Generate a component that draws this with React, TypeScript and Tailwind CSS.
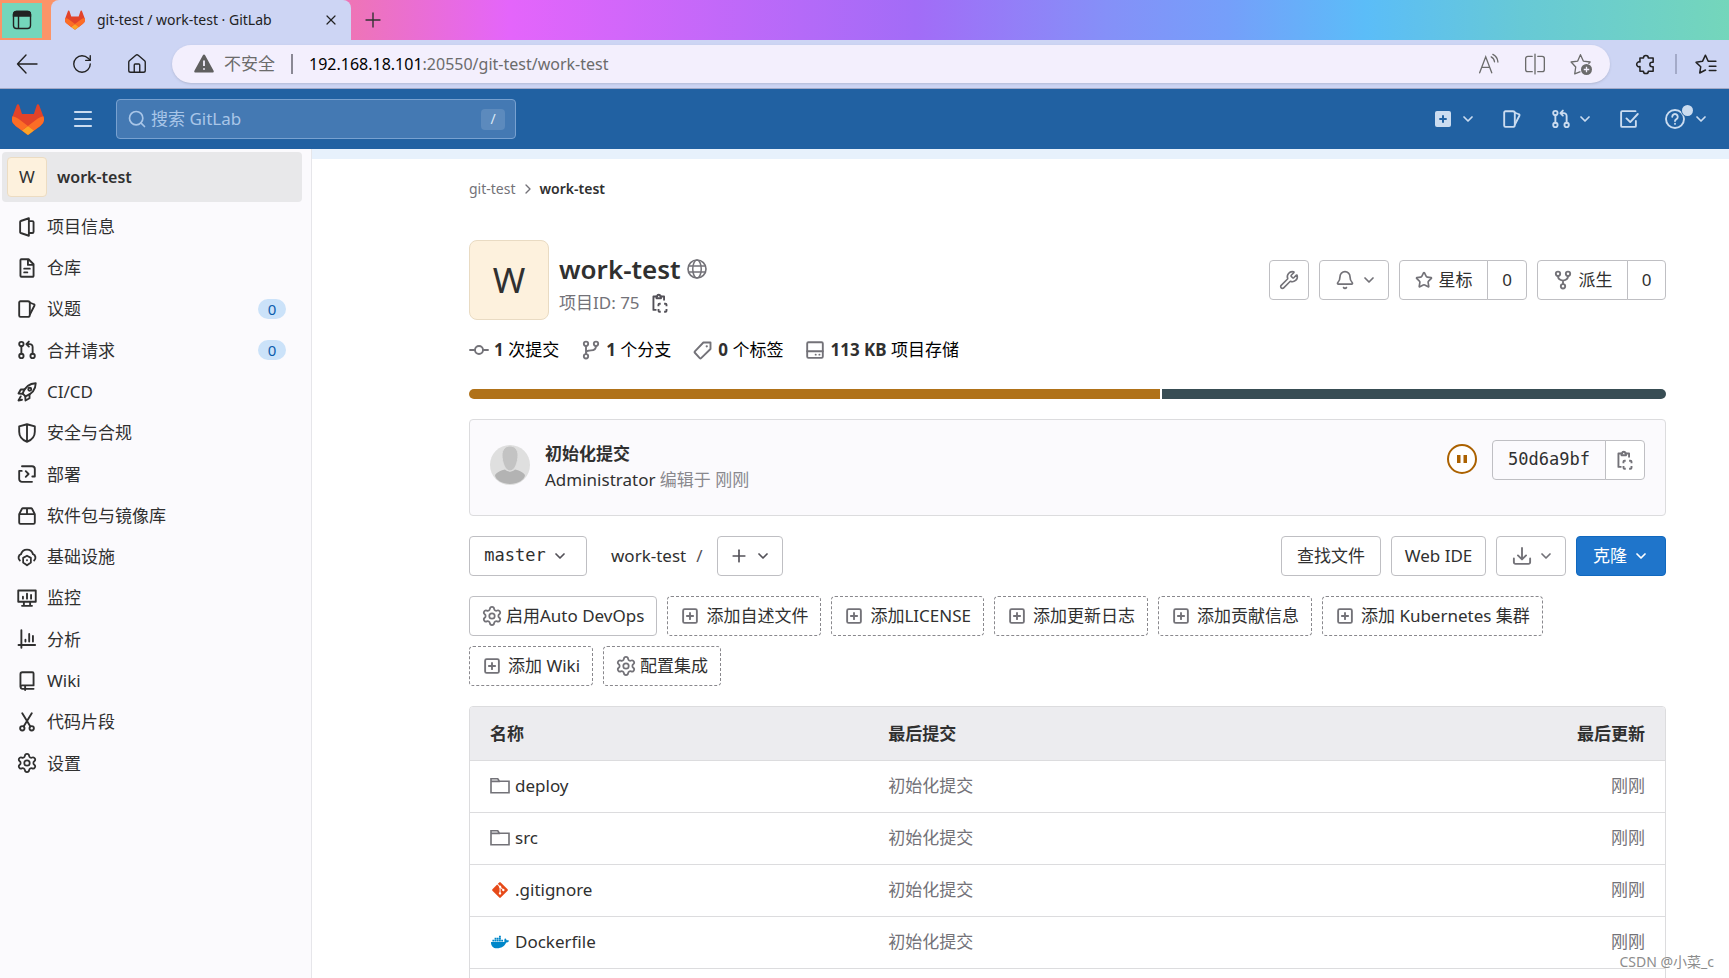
import type { ReactNode } from "react";
import { Bell, ChevronDown, ChevronRight, House, Menu, Plus, RotateCw, Search, Settings, Star, Wrench, X } from "lucide-react";
import { FaDocker, FaGitAlt } from "react-icons/fa";

function Glyph({ children, className = "size-5" }: { children: ReactNode; className?: string }) {
  return (
    <svg
      viewBox="0 0 16 16"
      className={`shrink-0 ${className}`}
      fill="none"
      stroke="currentColor"
      strokeWidth={1.5}
      strokeLinecap="round"
      strokeLinejoin="round"
      aria-hidden="true"
    >
      {children}
    </svg>
  );
}

function GitLabLogo({ className }: { className: string }) {
  return (
    <svg viewBox="0 0 25 24" className={`shrink-0 ${className}`} aria-hidden="true">
      <path
        d="m24.507 9.5-.034-.09L21.082.562a.896.896 0 0 0-1.694.091l-2.29 7.01H7.825L5.535.653a.898.898 0 0 0-1.694-.09L.451 9.411.416 9.5a6.297 6.297 0 0 0 2.09 7.278l.012.01.03.022 5.16 3.867 2.56 1.935 1.554 1.176a1.051 1.051 0 0 0 1.268 0l1.555-1.176 2.56-1.935 5.197-3.89.014-.01A6.297 6.297 0 0 0 24.507 9.5Z"
        fill="#E24329"
      />
      <path
        d="m24.507 9.5-.034-.09a11.44 11.44 0 0 0-4.56 2.051l-7.447 5.632 4.742 3.584 5.197-3.89.014-.01A6.297 6.297 0 0 0 24.507 9.5Z"
        fill="#FC6D26"
      />
      <path
        d="m7.707 20.677 2.56 1.935 1.555 1.176a1.051 1.051 0 0 0 1.268 0l1.555-1.176 2.56-1.935-4.743-3.584-4.755 3.584Z"
        fill="#FCA326"
      />
      <path
        d="M5.01 11.461a11.43 11.43 0 0 0-4.56-2.05L.416 9.5a6.297 6.297 0 0 0 2.09 7.278l.012.01.03.022 5.16 3.867 4.745-3.584-7.444-5.632Z"
        fill="#FC6D26"
      />
    </svg>
  );
}

const IssuesIcon = () => (
  <Glyph>
    <path d="M2.75 1.75h6a1.5 1.5 0 0 1 1.5 1.5v9.5a1.5 1.5 0 0 1-1.5 1.5h-6a1 1 0 0 1-1-1V2.75a1 1 0 0 1 1-1Z" />
    <path d="m10.5 3 3 1.2a.8.8 0 0 1 .5 1L10.5 12" />
  </Glyph>
);

const MergeRequestIcon = () => (
  <Glyph>
    <circle cx="3.5" cy="3.25" r="1.75" />
    <circle cx="3.5" cy="12.75" r="1.75" />
    <circle cx="12.5" cy="12.75" r="1.75" />
    <path d="M3.5 5v6M12.5 11V5.5a2.25 2.25 0 0 0-2.25-2.25H8M9.5 1.25l-2 2 2 2" />
  </Glyph>
);

const CopyIcon = () => (
  <Glyph>
    <path strokeLinecap="butt" d="M5 2.75H2.75V13.5H5.2M9 2.75h2.25V6" />
    <path d="M5.2 4.2h3.6V2.6H8.2a1.2 1.2 0 0 0-2.4 0h-.6v1.6Z" />
    <path
      strokeLinecap="butt"
      d="M6.75 10.5V9.4a.8.8 0 0 1 .8-.8h1M11.3 8.6h1.1a.8.8 0 0 1 .8.800v1.1M13.2 12.8v1.4a.8.8 0 0 1-.8.800h-1.1M8.600 15h-1a.8.8 0 0 1-.8-.800v-1.4"
    />
  </Glyph>
);

const PlusSquareIcon = () => (
  <Glyph>
    <rect x="2.5" y="2.5" width="11" height="11" rx="1.2" />
    <path d="M8 5.5v5M5.5 8h5" />
  </Glyph>
);

const FolderIcon = () => (
  <Glyph>
    <path strokeLinejoin="miter" strokeWidth={1.3} d="M.8 13.4V2.2h5.4l1.3 2h7.700v9.2H.8ZM.8 4.300h7" />
  </Glyph>
);

const GlobeIcon = () => (
  <Glyph className="size-5 text-[#737278]">
    <circle cx="8" cy="8" r="7.2" strokeWidth={1.3} />
    <ellipse cx="8" cy="8" rx="3.4" ry="7.2" strokeWidth={1.2} />
    <path strokeWidth={1.2} d="M1.3 5.600h13.400M1.3 10.400h13.400" />
  </Glyph>
);

const Chevron = () => <ChevronDown className="size-4 shrink-0" strokeWidth={2.6} aria-hidden="true" />;

const Gear = () => (
  <Settings viewBox="1 1 22 22" className="size-5 shrink-0" strokeWidth={1.9} aria-hidden="true" />
);

type NavItem = { label: string; icon: ReactNode; count?: number };

const navItems: NavItem[] = [
  {
    label: "项目信息",
    icon: (
      <Glyph>
        <path d="M9.5 1 3 3.2a.7.7 0 0 0-.5.7v8.2c0 .3.2.6.5.7L9.5 15V1ZM9.5 3.25h2.75a1 1 0 0 1 1 1v7.5a1 1 0 0 1-1 1H9.5" />
      </Glyph>
    ),
  },
  {
    label: "仓库",
    icon: (
      <Glyph>
        <path d="M3.5 1h5.75l4 4v9.25a.75.75 0 0 1-.75.75h-9a.75.75 0 0 1-.75-.75V1.75A.75.75 0 0 1 3.5 1ZM8.75 1.5V5.5h4M5.75 8.5h4.5M5.75 11.5h2.5" />
      </Glyph>
    ),
  },
  { label: "议题", icon: <IssuesIcon />, count: 0 },
  { label: "合并请求", icon: <MergeRequestIcon />, count: 0 },
  {
    label: "CI/CD",
    icon: (
      <Glyph>
        <path d="M4.5 9.2C6.2 4.5 9.5 1.2 15 1c-.2 5.5-3.5 8.8-8.2 10.5L4.5 9.2Z" />
        <path d="M6 6H3L1.2 9.2l3.3.2M10 10v3l-3.200 1.800-.2-3.300M3 11.5l-1.800 3.300 2.800-.6" />
        <circle cx="10.2" cy="5.8" r="1.2" />
      </Glyph>
    ),
  },
  {
    label: "安全与合规",
    icon: (
      <Glyph>
        <path d="M8 1 1.75 2.75V7c0 4 2.75 6.75 6.25 8 3.5-1.25 6.25-4 6.25-8V2.75L8 1ZM8 1v14" />
      </Glyph>
    ),
  },
  {
    label: "部署",
    icon: (
      <Glyph>
        <path d="M4 1.75h8A2.25 2.25 0 0 1 14.25 4v6M12 14.25H4A2.25 2.25 0 0 1 1.75 12V5.5M1.75 5.5h2M14.25 10h-2M7 5.75 9.25 8 7 10.25" />
      </Glyph>
    ),
  },
  {
    label: "软件包与镜像库",
    icon: (
      <Glyph>
        <path d="M1.75 6.5 4 2.2a.9.9 0 0 1 .8-.45h6.4a.9.9 0 0 1 .8.45l2.25 4.3v6.75a1 1 0 0 1-1 1H2.75a1 1 0 0 1-1-1V6.5ZM1.75 6.5h12.5M8 1.75V6.5" />
      </Glyph>
    ),
  },
  {
    label: "基础设施",
    icon: (
      <Glyph>
        <path d="M2.3 10.8A3 3 0 0 1 3.2 5.700a5 5 0 0 1 9.600 0 3 3 0 0 1 .9 5.100" />
        <path strokeWidth={1.4} d="m8 7 3.100 1.700v3.700L8 14.600l-3.100-2.200V8.700L8 7Z" />
        <circle cx="8" cy="10.600" r=".3" strokeWidth={1} />
      </Glyph>
    ),
  },
  {
    label: "监控",
    icon: (
      <Glyph>
        <path d="M1 2h14v9H1V2ZM5.5 11v2.8M10.5 11v2.8M4 14.25h8M4.75 7v1.5M8 4.5v4M11.25 5.5v3" />
      </Glyph>
    ),
  },
  {
    label: "分析",
    icon: (
      <Glyph>
        <path d="M3.5 1v14M1.2 12.75h13.3M6.75 8.5V10M9.75 4v6M12.75 5.5V10" />
      </Glyph>
    ),
  },
  {
    label: "Wiki",
    icon: (
      <Glyph>
        <path d="M13.25 11.5V2a1 1 0 0 0-1-1h-8a1.5 1.5 0 0 0-1.5 1.5v10M13.25 11.5h-9a1.3 1.3 0 0 0 0 2.75h9M6.5 12v3.2" />
      </Glyph>
    ),
  },
  {
    label: "代码片段",
    icon: (
      <Glyph>
        <circle cx="4.25" cy="13" r="1.75" />
        <circle cx="11.75" cy="13" r="1.75" />
        <path d="m4.2 1 6.5 10.6M11.8 1 5.3 11.6" />
      </Glyph>
    ),
  },
  { label: "设置", icon: <Gear /> },
];

const files = [
  { name: "deploy", icon: <FolderIcon /> },
  { name: "src", icon: <FolderIcon /> },
  { name: ".gitignore", icon: <FaGitAlt className="mx-px size-[18px] text-[#e64a19]" aria-hidden="true" /> },
  { name: "Dockerfile", icon: <FaDocker className="mx-px size-[18px] text-[#0087c9]" aria-hidden="true" /> },
];

const quickActions = [
  { label: "启用Auto DevOps", gear: true, dashed: false },
  { label: "添加自述文件", gear: false, dashed: true },
  { label: "添加LICENSE", gear: false, dashed: true },
  { label: "添加更新日志", gear: false, dashed: true },
  { label: "添加贡献信息", gear: false, dashed: true },
  { label: "添加 Kubernetes 集群", gear: false, dashed: true },
  { label: "添加 Wiki", gear: false, dashed: true },
  { label: "配置集成", gear: true, dashed: true },
];

function BrowserChrome() {
  return (
    <header className="shrink-0">
      <div className="flex h-10 bg-[linear-gradient(90deg,#fb9468_0%,#fb9468_3%,#ee74b8_20.5%,#e465fb_29.5%,#a26cf7_53%,#8590f8_64%,#759ffa_71%,#5bbdf8_79%,#67c9d6_88%,#74d6bb_100%)]">
        <div className="flex w-[51px] items-center pl-0.5">
          <button aria-label="标签页操作" className="flex h-[35px] w-10 items-center justify-center bg-[#74d6bb] text-[#222]">
            <svg viewBox="0 0 20 20" className="size-5" fill="none" stroke="currentColor" strokeWidth="1.4" aria-hidden="true">
              <rect x="1.5" y="1.5" width="17" height="17" rx="3" />
              <path d="M6.5 6v12" />
              <path d="M1.5 6V4.5a3 3 0 0 1 3-3h11a3 3 0 0 1 3 3V6Z" fill="currentColor" />
            </svg>
          </button>
        </div>
        <div className="flex w-[300px] items-center rounded-t-lg bg-[#cdd5f4] pr-3 pl-3.5 text-sm text-[#222]">
          <GitLabLogo className="h-5 w-5" />
          <span className="ml-3 grow whitespace-nowrap">git-test / work-test · GitLab</span>
          <button aria-label="关闭标签页">
            <X className="size-4" strokeWidth={1.8} />
          </button>
        </div>
        <button aria-label="新建标签页" className="ml-2.5 text-[#333]">
          <Plus className="size-6" strokeWidth={1.4} />
        </button>
      </div>
      <div className="flex h-[49px] items-center border-b border-[#a2a9c6] bg-[#cdd5f4] pr-3 text-[#222]">
        <div className="flex w-[172px] items-center gap-[33px] pl-4">
          <button aria-label="后退">
            <svg viewBox="0 0 22 22" className="size-[22px]" fill="none" stroke="currentColor" strokeWidth="1.4" strokeLinecap="round" strokeLinejoin="round" aria-hidden="true">
              <path d="M21 11H1.500M10 2 1.500 11l8.500 9" />
            </svg>
          </button>
          <button aria-label="刷新">
            <RotateCw className="size-[22px]" strokeWidth={1.5} />
          </button>
          <button aria-label="主页">
            <House className="size-[22px]" strokeWidth={1.5} />
          </button>
        </div>
        <div className="flex h-[38px] grow items-center rounded-full bg-[#f3effd] pr-[18px] pl-[22px] text-[#6b6b6b] shadow-sm">
          <svg viewBox="0 0 20 20" className="size-5" aria-hidden="true">
            <path d="M8.9 1.2a1.25 1.25 0 0 1 2.2 0l8.500 15.5a1.25 1.25 0 0 1-1.1 1.9h-17a1.25 1.25 0 0 1-1.1-1.9Z" fill="#5f5f5f" />
            <path d="M10 6.5V12M10 14.2v1.6" stroke="#f3effd" strokeWidth="1.8" />
          </svg>
          <span className="ml-2.5 text-[17px]">不安全</span>
          <span className="mx-4 h-5 w-0.5 bg-[#8a8894]" />
          <span className="grow text-base whitespace-nowrap">
            <span className="text-black">192.168.18.101</span>:20550/git-test/work-test
          </span>
          <div className="flex items-center gap-6">
            <button aria-label="大声朗读">
              <svg viewBox="0 0 20 20" className="size-[22px]" fill="none" stroke="currentColor" strokeWidth="1.2" strokeLinecap="round" aria-hidden="true">
                <path d="M1.5 18 7 3.5 12.5 18M3.4 13h7.2M12 3.5c1.8 1 2.8 2.5 3 4.5M13.5 1.2c2.8 1.4 4.4 3.8 4.6 7" />
              </svg>
            </button>
            <button aria-label="分屏">
              <svg viewBox="0 0 20 20" className="size-[22px]" fill="none" stroke="currentColor" strokeWidth="1.2" strokeLinecap="round" aria-hidden="true">
                <path d="M7.5 3h-4a2 2 0 0 0-2 2v10a2 2 0 0 0 2 2h4M12.5 3h4a2 2 0 0 1 2 2v10a2 2 0 0 1-2 2h-4M10 1v18" />
              </svg>
            </button>
            <button aria-label="收藏此页">
              <svg viewBox="0 0 20 20" className="size-[22px]" fill="none" stroke="currentColor" strokeWidth="1.2" strokeLinejoin="round" aria-hidden="true">
                <path d="m9.5 17-5.2 2 .9-6.3L1 8.200l6-.9 2.500-5.800 2.600 5.800 6.200.9-1.500 1.600" />
                <circle cx="15" cy="15" r="5" fill="currentColor" stroke="none" />
                <path d="M15 12.5v5M12.5 15h5" stroke="#f3effd" />
              </svg>
            </button>
          </div>
        </div>
        <div className="flex items-center pl-[25px]">
          <button aria-label="扩展">
            <svg viewBox="0 0 20 20" className="size-[22px]" fill="none" stroke="currentColor" strokeWidth="1.4" strokeLinejoin="round" aria-hidden="true">
              <path d="M4.500 4.500h3.200a2.200 2.200 0 1 1 4.400 0h4.400v4h-1a2 2 0 0 0 0 4h1v4h-4.400a2.200 2.200 0 1 1-4.400 0H4.500v-4.200a2.200 2.200 0 1 1 0-4.100Z" />
            </svg>
          </button>
          <span className="mx-[18px] h-5 w-0.5 bg-[#a3aac8]" />
          <button aria-label="收藏夹">
            <svg viewBox="0 0 20 20" className="size-[22px]" fill="none" stroke="currentColor" strokeWidth="1.4" strokeLinejoin="round" strokeLinecap="round" aria-hidden="true">
              <path d="m9.500 15.500-5.200 2.700.9-5.700L1 8.500l5.800-.9L9.500 2 12 7.500h7M13 12h6M13 16h6" />
            </svg>
          </button>
        </div>
      </div>
    </header>
  );
}

function Navbar() {
  return (
    <nav className="flex h-[60px] shrink-0 items-center bg-[#2161a2] pr-5 pl-3 text-[#cbdcf0]">
      <a href="#" aria-label="GitLab">
        <GitLabLogo className="h-[31px] w-8" />
      </a>
      <button aria-label="菜单" className="ml-[27px]">
        <Menu className="size-6" strokeWidth={2.2} />
      </button>
      <label className="ml-[21px] flex h-10 w-[400px] items-center rounded border border-[#78a1d0] bg-[#4479b3] px-2.5 text-[#a9c6e8]">
        <Search className="size-5 shrink-0" strokeWidth={2} aria-hidden="true" />
        <input
          type="search"
          aria-label="搜索 GitLab"
          placeholder="搜索 GitLab"
          className="ml-1 min-w-0 grow bg-transparent text-[17px] outline-none placeholder:text-[#a9c6e8]"
        />
        <kbd className="flex h-[21px] w-6 items-center justify-center rounded-sm bg-[#5c8abd] font-[inherit] text-sm text-[#dbe8f6]">/</kbd>
      </label>
      <div className="ml-auto flex items-center">
        <button aria-label="新建" className="flex items-center gap-[9px]">
          <svg viewBox="0 0 16 16" className="size-4" aria-hidden="true">
            <rect width="16" height="16" rx="2" fill="currentColor" />
            <path d="M8 4.300v7.400M4.300 8h7.400" stroke="#2161a2" strokeWidth="2" />
          </svg>
          <Chevron />
        </button>
        <a href="#" aria-label="议题" className="ml-[26px]">
          <IssuesIcon />
        </a>
        <button aria-label="合并请求" className="ml-[29px] flex items-center gap-1.5">
          <MergeRequestIcon />
          <Chevron />
        </button>
        <a href="#" aria-label="待办事项" className="ml-[26px]">
          <Glyph>
            <path d="M13.5 9.5v4a.8.8 0 0 1-.8.8H2.500a.8.8 0 0 1-.8-.8V2.500a.8.8 0 0 1 .8-.8h10.700M6 7.500l3 3L15 4" />
          </Glyph>
        </a>
        <button aria-label="帮助" className="relative ml-[26px] flex items-center gap-2">
          <Glyph>
            <circle cx="8" cy="8" r="7.2" />
            <path d="M5.8 6.200a2.200 2.200 0 1 1 3.400 1.900c-.8.5-1.200.8-1.200 1.500M8 11.800v.1" />
          </Glyph>
          <span className="absolute -top-1 left-[17px] size-[11px] rounded-full bg-[#cbdcf0] ring-1 ring-[#2161a2]" />
          <Chevron />
        </button>
      </div>
    </nav>
  );
}

function Sidebar() {
  return (
    <aside className="w-[312px] shrink-0 border-r border-[#e6e6ea] bg-[#fbfafd] pt-[3px] text-[#303030]">
      <a href="#" className="mr-[9px] ml-0.5 flex h-[50px] items-center gap-2.5 rounded bg-[#e8e8ea] pl-[5px] text-base font-semibold">
        <span className="flex size-10 items-center justify-center rounded border border-[#ecdcc2] bg-[#fdf1dd] text-[17px] font-normal">W</span>
        work-test
      </a>
      <ul className="mt-1 grid h-[578px] auto-rows-fr">
        {navItems.map((item) => (
          <li key={item.label} className="flex">
            <a href="#" className="flex grow items-center gap-2.5 pr-[25px] pl-[17px]">
              {item.icon}
              <span className="grow">{item.label}</span>
              {item.count !== undefined && (
                <span className="flex h-5 w-7 items-center justify-center rounded-full bg-[#cbe2f9] text-[15px] text-[#0b5cad]">
                  {item.count}
                </span>
              )}
            </a>
          </li>
        ))}
      </ul>
    </aside>
  );
}

const buttonBase = "flex h-10 items-center justify-center rounded border border-[#bfbfc3] bg-white whitespace-nowrap";

function ProjectHeader() {
  return (
    <div className="mt-[39px] flex items-center">
      <div className="flex size-20 items-center justify-center rounded-lg border border-[#e9dbc3] bg-[#fdf1dd] text-[35px]">W</div>
      <div className="ml-2.5 flex flex-col pt-2.5">
        <h1 className="flex items-center gap-1.5 text-[26px] leading-9 font-semibold">
          work-test
          <GlobeIcon />
        </h1>
        <div className="flex h-8 items-center gap-2.5 text-[#737278]">
          项目ID: 75
          <button aria-label="复制项目ID" className="text-[#535158]">
            <CopyIcon />
          </button>
        </div>
      </div>
      <div className="ml-auto flex gap-2.5">
        <button aria-label="管理设置" className={`${buttonBase} w-10 text-[#737278]`}>
          <Wrench className="size-5" strokeWidth={1.9} />
        </button>
        <button aria-label="通知设置" className={`${buttonBase} w-[70px] gap-1.5 pl-1 text-[#737278]`}>
          <Bell className="size-5" strokeWidth={2} />
          <Chevron />
        </button>
        <div className="flex">
          <button className={`${buttonBase} w-[89px] gap-1.5 rounded-r-none`}>
            <Star className="size-[18px] text-[#737278]" strokeWidth={2.2} aria-hidden="true" />
            星标
          </button>
          <a href="#" className={`${buttonBase} -ml-px w-10 rounded-l-none`}>0</a>
        </div>
        <div className="flex">
          <button className={`${buttonBase} w-[91px] gap-1.5 rounded-r-none`}>
            <Glyph className="size-5 text-[#737278]">
              <circle cx="4" cy="3" r="1.75" />
              <circle cx="12" cy="3" r="1.75" />
              <circle cx="8" cy="13" r="1.75" />
              <path d="M4 5c0 2 1.5 3 4 3.5 2.500-.5 4-1.500 4-3.500M8 8.500v2.600" />
            </Glyph>
            派生
          </button>
          <a href="#" className={`${buttonBase} -ml-px w-[39px] rounded-l-none`}>0</a>
        </div>
      </div>
    </div>
  );
}

function Stat({ icon, value, label }: { icon: ReactNode; value: string; label: string }) {
  return (
    <a href="#" className="flex items-center gap-[5px] text-black">
      <span className="text-[#737278]">{icon}</span>
      <span>
        <strong className="font-bold text-[#303030]">{value}</strong> {label}
      </span>
    </a>
  );
}

function Stats() {
  return (
    <div className="mt-4 flex h-7 gap-[22px]">
      <Stat
        value="1"
        label="次提交"
        icon={
          <Glyph>
            <circle cx="8" cy="8" r="3.2" />
            <path d="M.8 8h4M11.2 8h4" />
          </Glyph>
        }
      />
      <Stat
        value="1"
        label="个分支"
        icon={
          <Glyph>
            <circle cx="4" cy="3" r="1.75" />
            <circle cx="12" cy="3" r="1.75" />
            <circle cx="4" cy="13" r="1.75" />
            <path d="M4 5v6M12 5c0 2.5-1.5 3.25-4 3.25-2.5 0-4 .5-4 2" />
          </Glyph>
        }
      />
      <Stat
        value="0"
        label="个标签"
        icon={
          <Glyph>
            <path d="M8.3 2H14v5.200l-7.500 7.300a.8.8 0 0 1-1.100 0l-3.900-4.300a.8.8 0 0 1 0-1.100L8.300 2Z" />
            <circle cx="11" cy="5" r=".4" strokeWidth={1} />
          </Glyph>
        }
      />
      <Stat
        value="113 KB"
        label="项目存储"
        icon={
          <Glyph>
            <rect x="1.75" y="1.75" width="12.5" height="12.5" rx="1" />
            <path d="M1.75 9h12.5M8.5 11.700h.1M11.500 11.700h.1" />
          </Glyph>
        }
      />
    </div>
  );
}

function LastCommit() {
  return (
    <section className="mt-5 flex h-[97px] items-start rounded border border-[#dcdcde] bg-[#fbfafd] px-5 pt-5">
      <svg viewBox="0 0 40 40" className="mt-[5px] size-10 rounded-full" aria-hidden="true">
        <rect width="40" height="40" fill="#dfdfdf" />
        <path d="M5 30c2-3 6-4.500 10-5.500 2 2.500 8 2.500 10 0 4 1 8 2.500 10 5.500 0 5-8 9-15 9S5 35 5 30Z" fill="#b3b3b3" />
        <path d="M20 1c5 0 8 4 8 9 0 7-3 16-8 16s-8-9-8-16c0-5 3-9 8-9Z" fill="#c3c3c3" stroke="#dfdfdf" />
      </svg>
      <div className="ml-[15px] pt-px leading-[26px]">
        <a href="#" className="block font-bold">初始化提交</a>
        <p className="text-[#89888d]">
          <a href="#" className="text-[#303030]">Administrator</a> 编辑于 刚刚
        </p>
      </div>
      <a href="#" aria-label="流水线：等待中" className="mt-1 ml-auto text-[#ab6100]">
        <svg viewBox="0 0 30 30" className="size-[30px]" aria-hidden="true">
          <circle cx="15" cy="15" r="14" fill="#fff" stroke="currentColor" strokeWidth="2" />
          <path d="M10 11h3.5v8H10ZM16.5 11H20v8h-3.5Z" fill="currentColor" />
        </svg>
      </a>
      <div className="ml-[15px] flex">
        <span className="flex h-10 w-[114px] items-center justify-center rounded-l border border-[#bfbfc3] font-['DejaVu_Sans_Mono',monospace]">
          50d6a9bf
        </span>
        <button aria-label="复制提交SHA" className={`${buttonBase} -ml-px w-10 rounded-l-none text-[#737278]`}>
          <CopyIcon />
        </button>
      </div>
    </section>
  );
}

function TreeControls() {
  return (
    <div className="mt-5 flex items-center gap-2.5">
      <button className={`${buttonBase} w-[118px] gap-1.5 pr-1 font-['DejaVu_Sans_Mono',monospace]`}>
        master
        <span className="text-[#535158]">
          <Chevron />
        </span>
      </button>
      <a href="#" className="ml-3.5">work-test</a>
      <span className="text-[#535158]">/</span>
      <button aria-label="添加到目录树" className={`${buttonBase} ml-1 w-[66px] gap-1.5 text-[#535158]`}>
        <Plus className="size-5" strokeWidth={2} />
        <Chevron />
      </button>
      <button className={`${buttonBase} ml-auto w-[100px]`}>查找文件</button>
      <button className={`${buttonBase} w-[95px]`}>Web IDE</button>
      <button aria-label="下载" className={`${buttonBase} w-[70px] gap-1.5 pl-1 text-[#737278]`}>
        <Glyph>
          <path d="M1.5 10v3a1.25 1.25 0 0 0 1.25 1.25h10.5A1.25 1.25 0 0 0 14.5 13v-3M8 1.5v9M4.75 7.5 8 10.75l3.25-3.25" />
        </Glyph>
        <Chevron />
      </button>
      <button className="flex h-10 w-[90px] items-center justify-center gap-1.5 rounded border border-[#1068bf] bg-[#1f75cb] text-white">
        克隆
        <Chevron />
      </button>
    </div>
  );
}

function QuickActions() {
  return (
    <div className="mt-5 flex flex-wrap gap-2.5">
      {quickActions.map((action) => (
        <a
          key={action.label}
          href="#"
          className={`flex h-10 items-center rounded border px-3 whitespace-nowrap ${action.gear ? "gap-1" : "gap-1.5"} ${
            action.dashed ? "border-dashed border-[#89888d]" : "border-[#bfbfc3]"
          }`}
        >
          <span className="text-[#737278]">{action.gear ? <Gear /> : <PlusSquareIcon />}</span>
          {action.label}
        </a>
      ))}
    </div>
  );
}

function FileTable() {
  return (
    <div className="mt-5 overflow-hidden rounded border border-[#dcdcde] pb-14">
      <table className="w-full table-fixed border-collapse">
        <thead className="bg-[#ececef]">
          <tr className="h-[53px] border-b border-[#dcdcde]">
            <th className="px-5 text-left font-bold">名称</th>
            <th className="px-5 text-left font-bold">最后提交</th>
            <th className="px-5 text-right font-bold">最后更新</th>
          </tr>
        </thead>
        <tbody>
          {files.map((file) => (
            <tr key={file.name} className="h-[52px] border-b border-[#dcdcde]">
              <td className="px-5">
                <a href="#" className="flex items-center gap-[5px]">
                  <span className="text-[#737278]">{file.icon}</span>
                  {file.name}
                </a>
              </td>
              <td className="px-5 text-[#737278]">初始化提交</td>
              <td className="px-5 text-right text-[#737278]">刚刚</td>
            </tr>
          ))}
        </tbody>
      </table>
    </div>
  );
}

export default function App() {
  return (
    <div className="relative flex h-screen flex-col overflow-hidden bg-white font-['Noto_Sans','Noto_Sans_CJK_SC',sans-serif] text-[17px] text-[#303030]">
      <BrowserChrome />
      <Navbar />
      <div className="flex min-h-0 grow">
        <Sidebar />
        <main className="min-w-0 grow overflow-hidden">
          <div className="h-2.5 bg-[#e7f1fc]" />
          <div className="pr-[63px] pl-[157px]">
            <nav aria-label="面包屑" className="flex items-center gap-1 pt-[18px] text-sm leading-6">
              <a href="#" className="text-[#737278]">git-test</a>
              <ChevronRight className="size-4 text-[#737278]" strokeWidth={2} aria-hidden="true" />
              <a href="#" className="font-semibold">work-test</a>
            </nav>
            <ProjectHeader />
            <Stats />
            <div className="mt-[25px] flex h-2.5 gap-0.5 overflow-hidden rounded-full">
              <div className="w-[57.7%] bg-[#b07219]" />
              <div className="grow bg-[#384d54]" />
            </div>
            <LastCommit />
            <TreeControls />
            <QuickActions />
            <FileTable />
          </div>
        </main>
      </div>
      <div className="absolute right-[15px] bottom-1.5 text-sm text-[#8c8c8c]">CSDN @小菜_c</div>
    </div>
  );
}
